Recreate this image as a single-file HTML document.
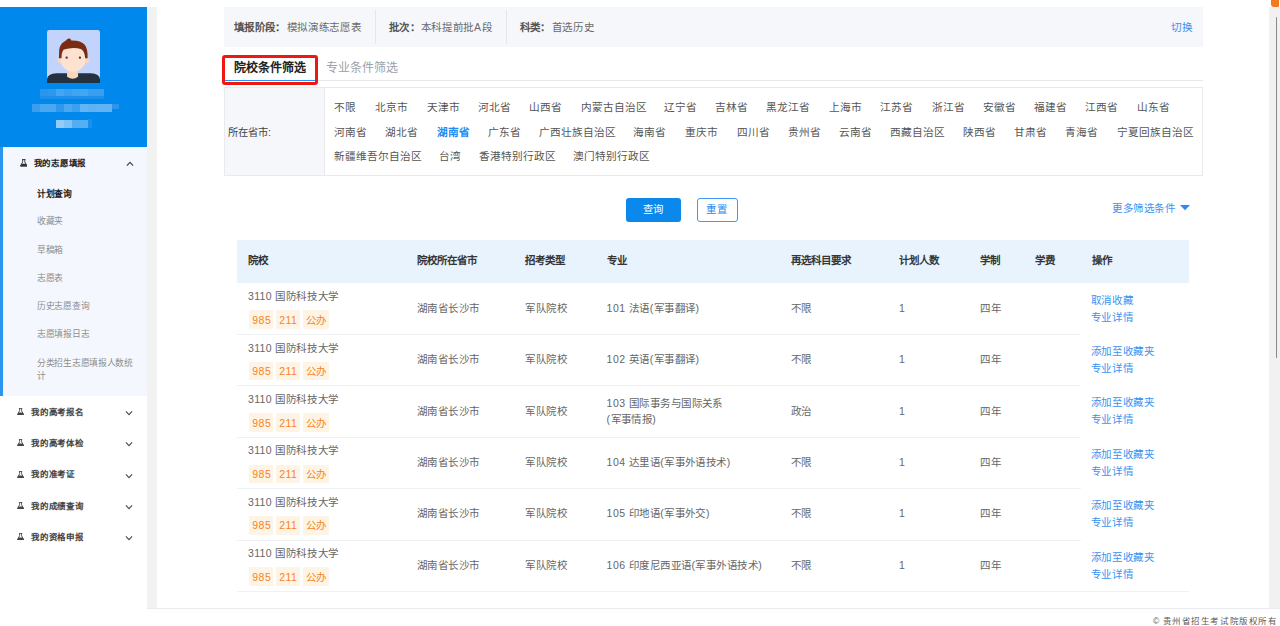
<!DOCTYPE html><html lang="zh-CN"><head><meta charset="utf-8"><style>
*{margin:0;padding:0;box-sizing:border-box}
html,body{width:1280px;height:626px;overflow:hidden;background:#fff}
body{position:relative;font-family:"Liberation Sans",sans-serif}
.t{position:absolute;white-space:nowrap;line-height:1}
</style></head><body>
<div style="position:absolute;left:1271px;top:0px;width:8.2px;height:6.8px;background:#f47820;border-radius:0 0 1px 3px"></div>
<div style="position:absolute;left:0px;top:7px;width:147px;height:140px;background:#0088ec"></div>
<div style="position:absolute;left:147px;top:7px;width:10px;height:601px;background:#f2f2f2"></div>
<div style="position:absolute;left:1269px;top:7px;width:11px;height:601px;background:#f1f1f1"></div>
<div style="position:absolute;left:1276px;top:17px;width:1.4px;height:341px;background:#8a8a8a;border-radius:1px"></div>
<div style="position:absolute;left:147px;top:608px;width:1133px;height:1px;background:#e9ebee"></div>
<svg style="position:absolute;left:47px;top:30px" width="53" height="53" viewBox="30 30 555 555">
<rect x="30" y="30" width="555" height="555" rx="25" fill="#c3d4fc"/>
<path d="M30,585 L30,545 Q35,488 130,482 L490,482 Q580,488 585,545 L585,585 Z" fill="#243140"/>
<path d="M240,430 L355,430 L355,520 Q300,560 240,520 Z" fill="#fbd4bc"/>
<circle cx="160" cy="350" r="26" fill="#fbd4bc"/>
<circle cx="450" cy="350" r="26" fill="#fbd4bc"/>
<ellipse cx="302" cy="335" rx="132" ry="132" fill="#fde2cf"/>
<path d="M155,325 L158,235 Q170,165 225,142 Q248,112 272,120 L285,140 Q385,138 425,185 Q458,225 455,325 L430,325 Q425,250 385,228 Q300,205 205,235 Q180,262 182,325 Z" fill="#7a2b12"/>
<circle cx="236" cy="320" r="12" fill="#4b2b3c"/>
<circle cx="375" cy="320" r="12" fill="#4b2b3c"/>
</svg>
<div style="position:absolute;left:40px;top:89px;width:8px;height:7px;background:#2995ec"></div>
<div style="position:absolute;left:48px;top:89px;width:8px;height:7px;background:#2e98ee"></div>
<div style="position:absolute;left:56px;top:89px;width:8px;height:7px;background:#45a5f0"></div>
<div style="position:absolute;left:64px;top:89px;width:8px;height:7px;background:#3a9ff0"></div>
<div style="position:absolute;left:72px;top:89px;width:8px;height:7px;background:#42a3f0"></div>
<div style="position:absolute;left:80px;top:89px;width:8px;height:7px;background:#44a5f0"></div>
<div style="position:absolute;left:88px;top:89px;width:8px;height:7px;background:#3a9eee"></div>
<div style="position:absolute;left:96px;top:89px;width:8px;height:7px;background:#3a9eee"></div>
<div style="position:absolute;left:40px;top:96px;width:64px;height:3px;background:#1a8fec"></div>
<div style="position:absolute;left:32px;top:104px;width:8px;height:8px;background:#3a9eee"></div>
<div style="position:absolute;left:40px;top:104px;width:8px;height:8px;background:#4aa8f2"></div>
<div style="position:absolute;left:48px;top:104px;width:8px;height:8px;background:#4aa8f2"></div>
<div style="position:absolute;left:56px;top:104px;width:8px;height:8px;background:#2e98ee"></div>
<div style="position:absolute;left:64px;top:104px;width:8px;height:8px;background:#4aa8f2"></div>
<div style="position:absolute;left:72px;top:104px;width:8px;height:8px;background:#3aa0f0"></div>
<div style="position:absolute;left:80px;top:104px;width:8px;height:8px;background:#63b5f5"></div>
<div style="position:absolute;left:88px;top:104px;width:8px;height:8px;background:#5eb2f4"></div>
<div style="position:absolute;left:96px;top:104px;width:8px;height:8px;background:#60b3f5"></div>
<div style="position:absolute;left:104px;top:104px;width:8px;height:8px;background:#60b3f5"></div>
<div style="position:absolute;left:112px;top:104px;width:7px;height:5px;background:#2a96ee"></div>
<div style="position:absolute;left:56px;top:120px;width:8px;height:8px;background:#93ccf8"></div>
<div style="position:absolute;left:64px;top:120px;width:8px;height:8px;background:#80c2f6"></div>
<div style="position:absolute;left:72px;top:120px;width:8px;height:8px;background:#52aef3"></div>
<div style="position:absolute;left:80px;top:120px;width:8px;height:8px;background:#55aff3"></div>
<div style="position:absolute;left:88px;top:119px;width:4px;height:9px;background:#1a8fec"></div>
<div style="position:absolute;left:0px;top:147px;width:147px;height:249px;background:#f4f8fe"></div>
<div style="position:absolute;left:0px;top:147px;width:3px;height:249px;background:#2b95ef"></div>
<svg style="position:absolute;left:19.8px;top:159.2px" width="7.5" height="7.5" viewBox="0 0 7 7"><path d="M1.9,0.45 H5.1 M2.55,0.45 V2.7 L0.5,6.5 H6.5 L4.45,2.7 V0.45" fill="none" stroke="#333" stroke-width="0.85"/><path d="M1.3,4.5 H5.7 L6.9,7 H0.1 Z" fill="#333"/></svg>
<div class="t" style="left:33.8px;top:159.4px;font-size:8.5px;color:#222;font-weight:bold;letter-spacing:-0.32px">我的志愿填报</div>
<svg style="position:absolute;left:125.7px;top:161px" width="8" height="6" viewBox="0 0 8 6"><path d="M0.9,4.6 L4,1.4 L7.1,4.6" fill="none" stroke="#3c4654" stroke-width="1.25"/></svg>
<div class="t" style="left:37px;top:189.5px;font-size:8.8px;color:#222;font-weight:bold;letter-spacing:-0.3px">计划查询</div>
<div class="t" style="left:37px;top:217.2px;font-size:8.8px;color:#8e8e8e;letter-spacing:-0.3px">收藏夹</div>
<div class="t" style="left:37px;top:245.5px;font-size:8.8px;color:#8e8e8e;letter-spacing:-0.3px">草稿箱</div>
<div class="t" style="left:37px;top:273.8px;font-size:8.8px;color:#8e8e8e;letter-spacing:-0.3px">志愿表</div>
<div class="t" style="left:37px;top:302.1px;font-size:8.8px;color:#8e8e8e;letter-spacing:-0.3px">历史志愿查询</div>
<div class="t" style="left:37px;top:330.4px;font-size:8.8px;color:#8e8e8e;letter-spacing:-0.3px">志愿填报日志</div>
<div class="t" style="left:37px;top:358.6px;font-size:8.8px;color:#8e8e8e;letter-spacing:-0.3px">分类招生志愿填报人数统</div>
<div class="t" style="left:37px;top:371.8px;font-size:8.8px;color:#8e8e8e;">计</div>
<svg style="position:absolute;left:17px;top:407.8px" width="7.2" height="7.2" viewBox="0 0 7 7"><path d="M1.9,0.45 H5.1 M2.55,0.45 V2.7 L0.5,6.5 H6.5 L4.45,2.7 V0.45" fill="none" stroke="#444" stroke-width="0.85"/><path d="M1.3,4.5 H5.7 L6.9,7 H0.1 Z" fill="#444"/></svg>
<div class="t" style="left:31.3px;top:407.7px;font-size:8.5px;color:#444;font-weight:bold;letter-spacing:-0.32px">我的高考报名</div>
<svg style="position:absolute;left:125.4px;top:409.8px" width="8" height="6" viewBox="0 0 8 6"><path d="M0.9,1.4 L4,4.6 L7.1,1.4" fill="none" stroke="#4a5262" stroke-width="1.25"/></svg>
<svg style="position:absolute;left:17px;top:439.15000000000003px" width="7.2" height="7.2" viewBox="0 0 7 7"><path d="M1.9,0.45 H5.1 M2.55,0.45 V2.7 L0.5,6.5 H6.5 L4.45,2.7 V0.45" fill="none" stroke="#444" stroke-width="0.85"/><path d="M1.3,4.5 H5.7 L6.9,7 H0.1 Z" fill="#444"/></svg>
<div class="t" style="left:31.3px;top:439.05px;font-size:8.5px;color:#444;font-weight:bold;letter-spacing:-0.32px">我的高考体检</div>
<svg style="position:absolute;left:125.4px;top:441.15000000000003px" width="8" height="6" viewBox="0 0 8 6"><path d="M0.9,1.4 L4,4.6 L7.1,1.4" fill="none" stroke="#4a5262" stroke-width="1.25"/></svg>
<svg style="position:absolute;left:17px;top:470.5px" width="7.2" height="7.2" viewBox="0 0 7 7"><path d="M1.9,0.45 H5.1 M2.55,0.45 V2.7 L0.5,6.5 H6.5 L4.45,2.7 V0.45" fill="none" stroke="#444" stroke-width="0.85"/><path d="M1.3,4.5 H5.7 L6.9,7 H0.1 Z" fill="#444"/></svg>
<div class="t" style="left:31.3px;top:470.4px;font-size:8.5px;color:#444;font-weight:bold;letter-spacing:-0.32px">我的准考证</div>
<svg style="position:absolute;left:125.4px;top:472.5px" width="8" height="6" viewBox="0 0 8 6"><path d="M0.9,1.4 L4,4.6 L7.1,1.4" fill="none" stroke="#4a5262" stroke-width="1.25"/></svg>
<svg style="position:absolute;left:17px;top:501.85px" width="7.2" height="7.2" viewBox="0 0 7 7"><path d="M1.9,0.45 H5.1 M2.55,0.45 V2.7 L0.5,6.5 H6.5 L4.45,2.7 V0.45" fill="none" stroke="#444" stroke-width="0.85"/><path d="M1.3,4.5 H5.7 L6.9,7 H0.1 Z" fill="#444"/></svg>
<div class="t" style="left:31.3px;top:501.75px;font-size:8.5px;color:#444;font-weight:bold;letter-spacing:-0.32px">我的成绩查询</div>
<svg style="position:absolute;left:125.4px;top:503.85px" width="8" height="6" viewBox="0 0 8 6"><path d="M0.9,1.4 L4,4.6 L7.1,1.4" fill="none" stroke="#4a5262" stroke-width="1.25"/></svg>
<svg style="position:absolute;left:17px;top:533.1999999999999px" width="7.2" height="7.2" viewBox="0 0 7 7"><path d="M1.9,0.45 H5.1 M2.55,0.45 V2.7 L0.5,6.5 H6.5 L4.45,2.7 V0.45" fill="none" stroke="#444" stroke-width="0.85"/><path d="M1.3,4.5 H5.7 L6.9,7 H0.1 Z" fill="#444"/></svg>
<div class="t" style="left:31.3px;top:533.1px;font-size:8.5px;color:#444;font-weight:bold;letter-spacing:-0.32px">我的资格申报</div>
<svg style="position:absolute;left:125.4px;top:535.1999999999999px" width="8" height="6" viewBox="0 0 8 6"><path d="M0.9,1.4 L4,4.6 L7.1,1.4" fill="none" stroke="#4a5262" stroke-width="1.25"/></svg>
<div style="position:absolute;left:224px;top:7px;width:979px;height:40px;background:#f5f7fa"></div>
<div class="t" style="left:234px;top:21.5px;font-size:10.5px;color:#555;font-weight:bold;letter-spacing:0.35px">填报阶段：</div>
<div class="t" style="left:286.5px;top:22px;font-size:10.5px;color:#6a6a6a;letter-spacing:0.7px">模拟演练志愿表</div>
<div style="position:absolute;left:375px;top:10px;width:1px;height:34px;background:#e4e6ea"></div>
<div class="t" style="left:389px;top:21.5px;font-size:10.5px;color:#555;font-weight:bold;letter-spacing:0.35px">批次：</div>
<div class="t" style="left:420.5px;top:22px;font-size:10.5px;color:#6a6a6a;letter-spacing:0.7px">本科提前批A段</div>
<div style="position:absolute;left:506px;top:10px;width:1px;height:34px;background:#e4e6ea"></div>
<div class="t" style="left:519.5px;top:21.5px;font-size:10.5px;color:#555;font-weight:bold;letter-spacing:0.35px">科类：</div>
<div class="t" style="left:551.5px;top:22px;font-size:10.5px;color:#6a6a6a;letter-spacing:0.7px">首选历史</div>
<div class="t" style="left:1171px;top:22px;font-size:10.6px;color:#3c8ff0;">切换</div>
<div style="position:absolute;left:318px;top:80px;width:885px;height:1px;background:#e6e8ec"></div>
<div style="position:absolute;left:224.5px;top:80px;width:91px;height:1.2px;background:#2a92f0"></div>
<div style="position:absolute;left:222px;top:55px;width:96px;height:29.5px;border:3px solid #ee1712;border-radius:3px"></div>
<div class="t" style="left:234px;top:62px;font-size:12px;color:#222;font-weight:bold;">院校条件筛选</div>
<div class="t" style="left:325.7px;top:62px;font-size:12px;color:#9aa2ac;">专业条件筛选</div>
<div style="position:absolute;left:224px;top:87px;width:979px;height:89px;border:1px solid #e8eaee;background:#fff"></div>
<div style="position:absolute;left:225px;top:88px;width:100px;height:87px;background:#f5f7fa;border-right:1px solid #e8eaee"></div>
<div class="t" style="left:228px;top:128px;font-size:10.3px;color:#444;">所在省市:</div>
<div class="t" style="left:333.8px;top:102.3px;font-size:10.67px;color:#555;">不限</div>
<div class="t" style="left:375.3px;top:102.3px;font-size:10.67px;color:#555;">北京市</div>
<div class="t" style="left:426.5px;top:102.3px;font-size:10.67px;color:#555;">天津市</div>
<div class="t" style="left:477.7px;top:102.3px;font-size:10.67px;color:#555;">河北省</div>
<div class="t" style="left:529.3px;top:102.3px;font-size:10.67px;color:#555;">山西省</div>
<div class="t" style="left:580.5px;top:102.3px;font-size:10.67px;color:#555;">内蒙古自治区</div>
<div class="t" style="left:663.6px;top:102.3px;font-size:10.67px;color:#555;">辽宁省</div>
<div class="t" style="left:715px;top:102.3px;font-size:10.67px;color:#555;">吉林省</div>
<div class="t" style="left:766px;top:102.3px;font-size:10.67px;color:#555;">黑龙江省</div>
<div class="t" style="left:828.5px;top:102.3px;font-size:10.67px;color:#555;">上海市</div>
<div class="t" style="left:880px;top:102.3px;font-size:10.67px;color:#555;">江苏省</div>
<div class="t" style="left:931.5px;top:102.3px;font-size:10.67px;color:#555;">浙江省</div>
<div class="t" style="left:982.5px;top:102.3px;font-size:10.67px;color:#555;">安徽省</div>
<div class="t" style="left:1034px;top:102.3px;font-size:10.67px;color:#555;">福建省</div>
<div class="t" style="left:1085px;top:102.3px;font-size:10.67px;color:#555;">江西省</div>
<div class="t" style="left:1136.5px;top:102.3px;font-size:10.67px;color:#555;">山东省</div>
<div class="t" style="left:333.8px;top:126.9px;font-size:10.67px;color:#555;">河南省</div>
<div class="t" style="left:385px;top:126.9px;font-size:10.67px;color:#555;">湖北省</div>
<div class="t" style="left:436.6px;top:126.9px;font-size:10.67px;color:#1e8ef2;font-weight:bold;">湖南省</div>
<div class="t" style="left:487.8px;top:126.9px;font-size:10.67px;color:#555;">广东省</div>
<div class="t" style="left:539px;top:126.9px;font-size:10.67px;color:#555;">广西壮族自治区</div>
<div class="t" style="left:633.4px;top:126.9px;font-size:10.67px;color:#555;">海南省</div>
<div class="t" style="left:684.6px;top:126.9px;font-size:10.67px;color:#555;">重庆市</div>
<div class="t" style="left:736.5px;top:126.9px;font-size:10.67px;color:#555;">四川省</div>
<div class="t" style="left:787.5px;top:126.9px;font-size:10.67px;color:#555;">贵州省</div>
<div class="t" style="left:839px;top:126.9px;font-size:10.67px;color:#555;">云南省</div>
<div class="t" style="left:890px;top:126.9px;font-size:10.67px;color:#555;">西藏自治区</div>
<div class="t" style="left:962.5px;top:126.9px;font-size:10.67px;color:#555;">陕西省</div>
<div class="t" style="left:1014px;top:126.9px;font-size:10.67px;color:#555;">甘肃省</div>
<div class="t" style="left:1065px;top:126.9px;font-size:10.67px;color:#555;">青海省</div>
<div class="t" style="left:1116.5px;top:126.9px;font-size:10.67px;color:#555;">宁夏回族自治区</div>
<div class="t" style="left:333.8px;top:151.1px;font-size:10.67px;color:#555;">新疆维吾尔自治区</div>
<div class="t" style="left:438.8px;top:151.1px;font-size:10.67px;color:#555;">台湾</div>
<div class="t" style="left:479px;top:151.1px;font-size:10.67px;color:#555;">香港特别行政区</div>
<div class="t" style="left:573px;top:151.1px;font-size:10.67px;color:#555;">澳门特别行政区</div>
<div style="position:absolute;left:626px;top:198px;width:55px;height:24px;background:#0a88ec;border-radius:3px"></div>
<div class="t" style="left:642.5px;top:205.3px;font-size:10.4px;color:#fff;letter-spacing:0.3px">查询</div>
<div style="position:absolute;left:696.5px;top:198px;width:41.5px;height:24px;border:1px solid #3d9bf0;border-radius:3px;background:#fff"></div>
<div class="t" style="left:706.3px;top:205.3px;font-size:10.4px;color:#1a8cf0;letter-spacing:0.5px">重置</div>
<div class="t" style="left:1112.3px;top:203.1px;font-size:10.5px;color:#3a92f0;letter-spacing:0.55px">更多筛选条件</div>
<svg style="position:absolute;left:1179.6px;top:205.3px" width="10" height="6" viewBox="0 0 10 6"><path d="M0,0 H10 L5,5.2 Z" fill="#2a8cf0"/></svg>
<div style="position:absolute;left:237px;top:240px;width:952px;height:42.5px;background:#e8f3fd"></div>
<div class="t" style="left:248px;top:255.2px;font-size:10.5px;color:#363636;font-weight:bold;">院校</div>
<div class="t" style="left:417px;top:255.2px;font-size:10.5px;color:#363636;font-weight:bold;">院校所在省市</div>
<div class="t" style="left:525.3px;top:255.2px;font-size:10.5px;color:#363636;font-weight:bold;">招考类型</div>
<div class="t" style="left:606.6px;top:255.2px;font-size:10.5px;color:#363636;font-weight:bold;">专业</div>
<div class="t" style="left:790.5px;top:255.2px;font-size:10.5px;color:#363636;font-weight:bold;">再选科目要求</div>
<div class="t" style="left:899px;top:255.2px;font-size:10.5px;color:#363636;font-weight:bold;">计划人数</div>
<div class="t" style="left:980.2px;top:255.2px;font-size:10.5px;color:#363636;font-weight:bold;">学制</div>
<div class="t" style="left:1034.6px;top:255.2px;font-size:10.5px;color:#363636;font-weight:bold;">学费</div>
<div class="t" style="left:1091.5px;top:255.2px;font-size:10.5px;color:#363636;font-weight:bold;">操作</div>
<div class="t" style="left:248px;top:291.1px;font-size:10.5px;color:#666;"><span style="letter-spacing:0.3px">3110 </span><span style="letter-spacing:0.65px">国防科技大学</span></div>
<div style="position:absolute;left:249.3px;top:310.3px;width:24px;height:18.7px;background:#fef4e6;border-radius:1px"></div>
<div class="t" style="left:252.3px;top:314.8px;font-size:10.5px;color:#f7831c;letter-spacing:0.45px">985</div>
<div style="position:absolute;left:276.2px;top:310.3px;width:23.5px;height:18.7px;background:#fef4e6;border-radius:1px"></div>
<div class="t" style="left:279.2px;top:314.8px;font-size:10.5px;color:#f7831c;letter-spacing:0.45px">211</div>
<div style="position:absolute;left:302.9px;top:310.3px;width:26px;height:18.7px;background:#fef4e6;border-radius:1px"></div>
<div class="t" style="left:305.9px;top:314.8px;font-size:10.5px;color:#f7831c;letter-spacing:0.45px">公办</div>
<div class="t" style="left:417px;top:302.8px;font-size:10.5px;color:#666;letter-spacing:0.45px">湖南省长沙市</div>
<div class="t" style="left:525.3px;top:302.8px;font-size:10.5px;color:#666;letter-spacing:0.45px">军队院校</div>
<div class="t" style="left:606.6px;top:302.8px;font-size:10.5px;color:#666;letter-spacing:0.45px">101 法语(军事翻译)</div>
<div class="t" style="left:790.5px;top:302.8px;font-size:10.5px;color:#666;letter-spacing:0.45px">不限</div>
<div class="t" style="left:899px;top:302.8px;font-size:10.5px;color:#666;">1</div>
<div class="t" style="left:980.2px;top:302.8px;font-size:10.5px;color:#666;letter-spacing:0.45px">四年</div>
<div class="t" style="left:1090.8px;top:294.5px;font-size:10.5px;color:#3a92f0;letter-spacing:0.65px">取消收藏</div>
<div class="t" style="left:1090.8px;top:311.5px;font-size:10.5px;color:#3a92f0;letter-spacing:0.65px">专业详情</div>
<div style="position:absolute;left:237px;top:334px;width:844px;height:1px;background:#eff1f5"></div>
<div class="t" style="left:248px;top:342.5px;font-size:10.5px;color:#666;"><span style="letter-spacing:0.3px">3110 </span><span style="letter-spacing:0.65px">国防科技大学</span></div>
<div style="position:absolute;left:249.3px;top:361.7px;width:24px;height:18.7px;background:#fef4e6;border-radius:1px"></div>
<div class="t" style="left:252.3px;top:366.2px;font-size:10.5px;color:#f7831c;letter-spacing:0.45px">985</div>
<div style="position:absolute;left:276.2px;top:361.7px;width:23.5px;height:18.7px;background:#fef4e6;border-radius:1px"></div>
<div class="t" style="left:279.2px;top:366.2px;font-size:10.5px;color:#f7831c;letter-spacing:0.45px">211</div>
<div style="position:absolute;left:302.9px;top:361.7px;width:26px;height:18.7px;background:#fef4e6;border-radius:1px"></div>
<div class="t" style="left:305.9px;top:366.2px;font-size:10.5px;color:#f7831c;letter-spacing:0.45px">公办</div>
<div class="t" style="left:417px;top:354.2px;font-size:10.5px;color:#666;letter-spacing:0.45px">湖南省长沙市</div>
<div class="t" style="left:525.3px;top:354.2px;font-size:10.5px;color:#666;letter-spacing:0.45px">军队院校</div>
<div class="t" style="left:606.6px;top:354.2px;font-size:10.5px;color:#666;letter-spacing:0.45px">102 英语(军事翻译)</div>
<div class="t" style="left:790.5px;top:354.2px;font-size:10.5px;color:#666;letter-spacing:0.45px">不限</div>
<div class="t" style="left:899px;top:354.2px;font-size:10.5px;color:#666;">1</div>
<div class="t" style="left:980.2px;top:354.2px;font-size:10.5px;color:#666;letter-spacing:0.45px">四年</div>
<div class="t" style="left:1090.8px;top:345.9px;font-size:10.5px;color:#3a92f0;letter-spacing:0.65px">添加至收藏夹</div>
<div class="t" style="left:1090.8px;top:362.9px;font-size:10.5px;color:#3a92f0;letter-spacing:0.65px">专业详情</div>
<div style="position:absolute;left:237px;top:385px;width:844px;height:1px;background:#eff1f5"></div>
<div class="t" style="left:248px;top:393.90000000000003px;font-size:10.5px;color:#666;"><span style="letter-spacing:0.3px">3110 </span><span style="letter-spacing:0.65px">国防科技大学</span></div>
<div style="position:absolute;left:249.3px;top:413.1px;width:24px;height:18.7px;background:#fef4e6;border-radius:1px"></div>
<div class="t" style="left:252.3px;top:417.6px;font-size:10.5px;color:#f7831c;letter-spacing:0.45px">985</div>
<div style="position:absolute;left:276.2px;top:413.1px;width:23.5px;height:18.7px;background:#fef4e6;border-radius:1px"></div>
<div class="t" style="left:279.2px;top:417.6px;font-size:10.5px;color:#f7831c;letter-spacing:0.45px">211</div>
<div style="position:absolute;left:302.9px;top:413.1px;width:26px;height:18.7px;background:#fef4e6;border-radius:1px"></div>
<div class="t" style="left:305.9px;top:417.6px;font-size:10.5px;color:#f7831c;letter-spacing:0.45px">公办</div>
<div class="t" style="left:417px;top:405.6px;font-size:10.5px;color:#666;letter-spacing:0.45px">湖南省长沙市</div>
<div class="t" style="left:525.3px;top:405.6px;font-size:10.5px;color:#666;letter-spacing:0.45px">军队院校</div>
<div class="t" style="left:606.6px;top:397.6px;font-size:10.5px;color:#666;letter-spacing:0.45px">103 国际事务与国际关系</div>
<div class="t" style="left:606.6px;top:414.1px;font-size:10.5px;color:#666;letter-spacing:0.45px">(军事情报)</div>
<div class="t" style="left:790.5px;top:405.6px;font-size:10.5px;color:#666;letter-spacing:0.45px">政治</div>
<div class="t" style="left:899px;top:405.6px;font-size:10.5px;color:#666;">1</div>
<div class="t" style="left:980.2px;top:405.6px;font-size:10.5px;color:#666;letter-spacing:0.45px">四年</div>
<div class="t" style="left:1090.8px;top:397.3px;font-size:10.5px;color:#3a92f0;letter-spacing:0.65px">添加至收藏夹</div>
<div class="t" style="left:1090.8px;top:414.3px;font-size:10.5px;color:#3a92f0;letter-spacing:0.65px">专业详情</div>
<div style="position:absolute;left:237px;top:437px;width:844px;height:1px;background:#eff1f5"></div>
<div class="t" style="left:248px;top:445.3px;font-size:10.5px;color:#666;"><span style="letter-spacing:0.3px">3110 </span><span style="letter-spacing:0.65px">国防科技大学</span></div>
<div style="position:absolute;left:249.3px;top:464.5px;width:24px;height:18.7px;background:#fef4e6;border-radius:1px"></div>
<div class="t" style="left:252.3px;top:469.0px;font-size:10.5px;color:#f7831c;letter-spacing:0.45px">985</div>
<div style="position:absolute;left:276.2px;top:464.5px;width:23.5px;height:18.7px;background:#fef4e6;border-radius:1px"></div>
<div class="t" style="left:279.2px;top:469.0px;font-size:10.5px;color:#f7831c;letter-spacing:0.45px">211</div>
<div style="position:absolute;left:302.9px;top:464.5px;width:26px;height:18.7px;background:#fef4e6;border-radius:1px"></div>
<div class="t" style="left:305.9px;top:469.0px;font-size:10.5px;color:#f7831c;letter-spacing:0.45px">公办</div>
<div class="t" style="left:417px;top:457.0px;font-size:10.5px;color:#666;letter-spacing:0.45px">湖南省长沙市</div>
<div class="t" style="left:525.3px;top:457.0px;font-size:10.5px;color:#666;letter-spacing:0.45px">军队院校</div>
<div class="t" style="left:606.6px;top:457.0px;font-size:10.5px;color:#666;letter-spacing:0.45px">104 达里语(军事外语技术)</div>
<div class="t" style="left:790.5px;top:457.0px;font-size:10.5px;color:#666;letter-spacing:0.45px">不限</div>
<div class="t" style="left:899px;top:457.0px;font-size:10.5px;color:#666;">1</div>
<div class="t" style="left:980.2px;top:457.0px;font-size:10.5px;color:#666;letter-spacing:0.45px">四年</div>
<div class="t" style="left:1090.8px;top:448.7px;font-size:10.5px;color:#3a92f0;letter-spacing:0.65px">添加至收藏夹</div>
<div class="t" style="left:1090.8px;top:465.7px;font-size:10.5px;color:#3a92f0;letter-spacing:0.65px">专业详情</div>
<div style="position:absolute;left:237px;top:488px;width:844px;height:1px;background:#eff1f5"></div>
<div class="t" style="left:248px;top:496.70000000000005px;font-size:10.5px;color:#666;"><span style="letter-spacing:0.3px">3110 </span><span style="letter-spacing:0.65px">国防科技大学</span></div>
<div style="position:absolute;left:249.3px;top:515.9px;width:24px;height:18.7px;background:#fef4e6;border-radius:1px"></div>
<div class="t" style="left:252.3px;top:520.4px;font-size:10.5px;color:#f7831c;letter-spacing:0.45px">985</div>
<div style="position:absolute;left:276.2px;top:515.9px;width:23.5px;height:18.7px;background:#fef4e6;border-radius:1px"></div>
<div class="t" style="left:279.2px;top:520.4px;font-size:10.5px;color:#f7831c;letter-spacing:0.45px">211</div>
<div style="position:absolute;left:302.9px;top:515.9px;width:26px;height:18.7px;background:#fef4e6;border-radius:1px"></div>
<div class="t" style="left:305.9px;top:520.4px;font-size:10.5px;color:#f7831c;letter-spacing:0.45px">公办</div>
<div class="t" style="left:417px;top:508.40000000000003px;font-size:10.5px;color:#666;letter-spacing:0.45px">湖南省长沙市</div>
<div class="t" style="left:525.3px;top:508.40000000000003px;font-size:10.5px;color:#666;letter-spacing:0.45px">军队院校</div>
<div class="t" style="left:606.6px;top:508.40000000000003px;font-size:10.5px;color:#666;letter-spacing:0.45px">105 印地语(军事外交)</div>
<div class="t" style="left:790.5px;top:508.40000000000003px;font-size:10.5px;color:#666;letter-spacing:0.45px">不限</div>
<div class="t" style="left:899px;top:508.40000000000003px;font-size:10.5px;color:#666;">1</div>
<div class="t" style="left:980.2px;top:508.40000000000003px;font-size:10.5px;color:#666;letter-spacing:0.45px">四年</div>
<div class="t" style="left:1090.8px;top:500.1px;font-size:10.5px;color:#3a92f0;letter-spacing:0.65px">添加至收藏夹</div>
<div class="t" style="left:1090.8px;top:517.1px;font-size:10.5px;color:#3a92f0;letter-spacing:0.65px">专业详情</div>
<div style="position:absolute;left:237px;top:540px;width:844px;height:1px;background:#eff1f5"></div>
<div class="t" style="left:248px;top:548.1px;font-size:10.5px;color:#666;"><span style="letter-spacing:0.3px">3110 </span><span style="letter-spacing:0.65px">国防科技大学</span></div>
<div style="position:absolute;left:249.3px;top:567.3px;width:24px;height:18.7px;background:#fef4e6;border-radius:1px"></div>
<div class="t" style="left:252.3px;top:571.8px;font-size:10.5px;color:#f7831c;letter-spacing:0.45px">985</div>
<div style="position:absolute;left:276.2px;top:567.3px;width:23.5px;height:18.7px;background:#fef4e6;border-radius:1px"></div>
<div class="t" style="left:279.2px;top:571.8px;font-size:10.5px;color:#f7831c;letter-spacing:0.45px">211</div>
<div style="position:absolute;left:302.9px;top:567.3px;width:26px;height:18.7px;background:#fef4e6;border-radius:1px"></div>
<div class="t" style="left:305.9px;top:571.8px;font-size:10.5px;color:#f7831c;letter-spacing:0.45px">公办</div>
<div class="t" style="left:417px;top:559.8px;font-size:10.5px;color:#666;letter-spacing:0.45px">湖南省长沙市</div>
<div class="t" style="left:525.3px;top:559.8px;font-size:10.5px;color:#666;letter-spacing:0.45px">军队院校</div>
<div class="t" style="left:606.6px;top:559.8px;font-size:10.5px;color:#666;letter-spacing:0.45px">106 印度尼西亚语(军事外语技术)</div>
<div class="t" style="left:790.5px;top:559.8px;font-size:10.5px;color:#666;letter-spacing:0.45px">不限</div>
<div class="t" style="left:899px;top:559.8px;font-size:10.5px;color:#666;">1</div>
<div class="t" style="left:980.2px;top:559.8px;font-size:10.5px;color:#666;letter-spacing:0.45px">四年</div>
<div class="t" style="left:1090.8px;top:551.5px;font-size:10.5px;color:#3a92f0;letter-spacing:0.65px">添加至收藏夹</div>
<div class="t" style="left:1090.8px;top:568.5px;font-size:10.5px;color:#3a92f0;letter-spacing:0.65px">专业详情</div>
<div style="position:absolute;left:237px;top:591px;width:952px;height:1px;background:#eff1f5"></div>
<div class="t" style="left:1153px;top:617px;font-size:8.5px;color:#5a5a5a;letter-spacing:0.55px">© 贵州省招生考试院版权所有</div>
</body></html>
